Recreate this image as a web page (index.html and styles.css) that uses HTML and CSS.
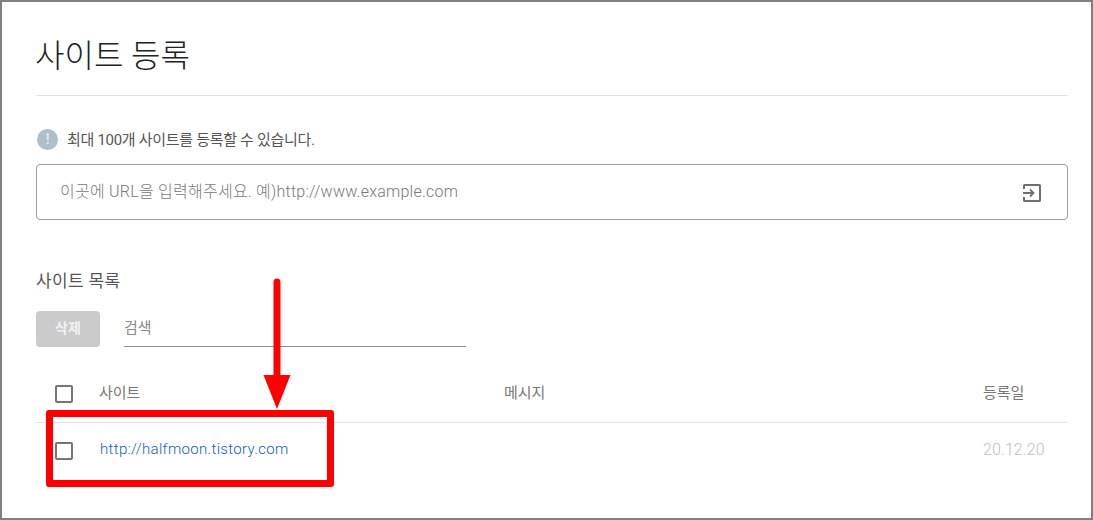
FILE: index.html
```html
<!DOCTYPE html>
<html lang="ko">
<head>
  <meta charset="UTF-8" />
  <title>사이트 등록</title>
  <link rel="stylesheet" href="styles.css">
</head>
<body>
  <div class="frame">
    <h1 class="title">사이트 등록</h1>

    <p class="notice">
      <span class="notice-icon">!</span>
      <span class="notice-text">최대 100개 사이트를 등록할 수 있습니다.</span>
    </p>

    <div class="url-box">
      <span class="url-placeholder">이곳에 URL을 입력해주세요. 예)http://www.example.com</span>
      <svg class="url-icon" viewBox="0 0 20 20" width="20" height="20">
        <path d="M2 6V2.500Q2 2 2.500 2H17.500Q18 2 18 2.500V17.500Q18 18 17.500 18H2.500Q2 18 2 17.500V14" fill="none" stroke="#6f6f6f" stroke-width="2"/>
        <path d="M1 10H11M8 6.500L11.500 10L8 13.500" fill="none" stroke="#6f6f6f" stroke-width="1.800"/>
      </svg>
    </div>

    <h2 class="list-title">사이트 목록</h2>

    <div class="toolbar">
      <button class="btn-delete">삭제</button>
      <div class="search">검색</div>
    </div>

    <div class="row row-head">
      <span class="check"></span>
      <span class="col-site">사이트</span>
      <span class="col-msg">메시지</span>
      <span class="col-date">등록일</span>
    </div>
    <div class="row row-body">
      <span class="check"></span>
      <a class="col-site site-link" href="#">http://halfmoon.tistory.com</a>
      <span class="col-msg"></span>
      <span class="col-date date-value">20.12.20</span>
    </div>

    <!-- 빨간 표시 -->
    <svg class="mark-arrow" viewBox="0 0 28 132" width="28" height="132">
      <path d="M14 4V100" stroke="#ff0000" stroke-width="7" stroke-linecap="round"/>
      <path d="M0.500 97H27.500L14 131Z" fill="#ff0000"/>
    </svg>
    <div class="mark-box"></div>
  </div>
</body>
</html>
```

FILE: styles.css
```css
* {
  box-sizing: border-box;
}

html, body {
  margin: 0;
  padding: 0;
  background: #fff;
}

body {
  font-family: Roboto, "Noto Sans CJK KR", sans-serif;
  color: #333;
}

.frame {
  position: relative;
  width: 1093px;
  height: 520px;
  border: 2px solid #808080;
  padding: 0 23px 0 34px;
  overflow: hidden;
}

/* 상단 제목 */
.title {
  margin: 0;
  height: 94px;
  border-bottom: 1px solid #e2e2e2;
  padding-top: 31px;
  text-indent: -1px;
  font-size: 32px;
  line-height: 46px;
  font-weight: 300;
  color: #222;
}

.notice {
  display: flex;
  align-items: center;
  gap: 9px;
  margin: 32px 0 0;
  height: 22px;
  font-size: 15px;
  letter-spacing: -0.3px;
  color: #555;
}

.notice-text {
  padding-bottom: 2px;
}

.notice-icon {
  width: 21px;
  height: 21px;
  margin-left: 1px;
  border-radius: 50%;
  background: #aebfca;
  color: #dfe6ea;
  font-size: 14px;
  font-weight: 700;
  line-height: 21px;
  text-align: center;
}

/* URL 입력 */
.url-box {
  display: flex;
  align-items: center;
  justify-content: space-between;
  height: 56px;
  margin-top: 14px;
  padding: 0 25px 0 23px;
  border: 1px solid #a0a0a0;
  border-radius: 4px;
}

.url-placeholder {
  font-size: 16px;
  font-weight: 300;
  letter-spacing: 0.25px;
  color: #777;
  position: relative;
  top: -2px;
}

.url-icon {
  margin-top: 2px;
}

.list-title {
  margin: 48px 0 0;
  font-size: 17px;
  line-height: 26px;
  font-weight: 400;
  letter-spacing: 0.35px;
  color: #555;
}

.toolbar {
  display: flex;
  gap: 24px;
  margin-top: 17px;
}

.btn-delete {
  width: 64px;
  height: 36px;
  padding: 0 0 4px;
  border: none;
  border-radius: 4px;
  background: #cbcbcb;
  color: #f2f2f2;
  font-family: inherit;
  font-size: 14px;
  font-weight: 700;
}

.search {
  width: 342px;
  height: 36px;
  border-bottom: 1px solid #8f8f8f;
  font-size: 15px;
  line-height: 35px;
  color: #8a8a8a;
}

/* 목록 표 */
.row {
  display: flex;
  align-items: center;
  font-size: 15px;
}

.row-head {
  height: 76px;
  padding-top: 18px;
  border-bottom: 1px solid #e2e2e2;
  color: #777;
}

.row-body {
  height: 56px;
}

.check {
  width: 18px;
  height: 18px;
  margin-left: 19px;
  border: 2px solid #757575;
  border-radius: 2px;
}

.col-site,
.col-msg,
.col-date {
  padding-bottom: 4px;
}

.col-site {
  width: 405px;
  margin-left: 26px;
}

.col-msg {
  width: 479px;
}

.col-date {
  width: 64px;
}

.site-link {
  padding-left: 1px;
  color: #0f5ccc;
  font-weight: 300;
  letter-spacing: 0.33px;
  text-decoration: none;
}

.date-value {
  color: #c0c0c0;
  font-size: 16px;
  font-weight: 300;
  letter-spacing: 0.1px;
}

.mark-arrow {
  position: absolute;
  left: 261px;
  top: 276px;
}

.mark-box {
  position: absolute;
  left: 44px;
  top: 408px;
  width: 288px;
  height: 77px;
  border: 7px solid #ff0000;
  border-radius: 3px;
}
```
